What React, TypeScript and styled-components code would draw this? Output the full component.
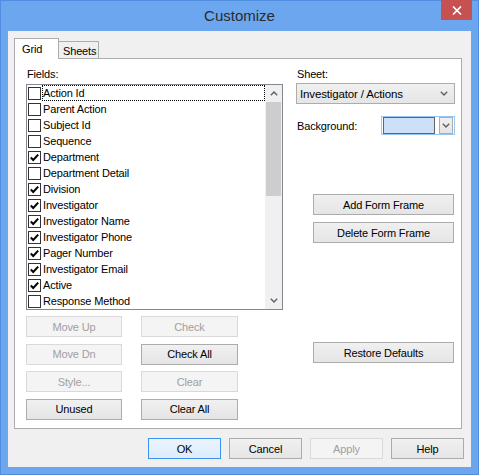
import { styled, createGlobalStyle } from "styled-components"

const GlobalStyle = createGlobalStyle`
    html, body {
        margin: 0;
        padding: 0;
        background: #6ba6ef;
    }
    body {
        font-family: "Liberation Sans", Arial, sans-serif;
        font-size: 11px;
        letter-spacing: -0.15px;
        color: #000;
    }
`

type field = {
    name: string
    checked: boolean
}

const fields: field[] = [
    { name: "Action Id", checked: false },
    { name: "Parent Action", checked: false },
    { name: "Subject Id", checked: false },
    { name: "Sequence", checked: false },
    { name: "Department", checked: true },
    { name: "Department Detail", checked: false },
    { name: "Division", checked: true },
    { name: "Investigator", checked: true },
    { name: "Investigator Name", checked: true },
    { name: "Investigator Phone", checked: true },
    { name: "Pager Number", checked: true },
    { name: "Investigator Email", checked: true },
    { name: "Active", checked: true },
    { name: "Response Method", checked: false },
]

const Chevron = ({ up }: { up?: boolean }) => (
    <svg width="8" height="5" viewBox="0 0 8 5">
        <polyline
            points={up ? "0.8,4.2 4,1 7.2,4.2" : "0.8,0.8 4,4 7.2,0.8"}
            fill="none"
            stroke="#606060"
            strokeWidth="1.4"
        />
    </svg>
)

const App = () => {
    return (
        <>
            <GlobalStyle />
            <Window>
                <TitleBar>
                    <span />
                    <Title>Customize</Title>
                    <CloseButton>
                        <svg width="10" height="9" viewBox="0 0 10 9">
                            <path d="M1 0.5 L9 8.5 M9 0.5 L1 8.5" stroke="#fff" strokeWidth="1.7" />
                        </svg>
                    </CloseButton>
                </TitleBar>
                <Client>
                    <TabStrip>
                        <Tab $active>Grid</Tab>
                        <Tab>Sheets</Tab>
                    </TabStrip>
                    <Panel>
                        <LeftColumn>
                            <Label>Fields:</Label>
                            <ListBox>
                                <Rows>
                                    {fields.map((f, i) => (
                                        <Row key={f.name}>
                                            <CheckBox>
                                                {f.checked && (
                                                    <svg width="11" height="11" viewBox="0 0 11 11">
                                                        <polyline
                                                            points="1.8,5.5 4.2,8 9.2,2.6"
                                                            fill="none"
                                                            stroke="#000"
                                                            strokeWidth="2"
                                                        />
                                                    </svg>
                                                )}
                                            </CheckBox>
                                            <RowText $focused={i === 0}>{f.name}</RowText>
                                        </Row>
                                    ))}
                                </Rows>
                                <ScrollBar>
                                    <ScrollArrow><Chevron up /></ScrollArrow>
                                    <Thumb />
                                    <Track />
                                    <ScrollArrow><Chevron /></ScrollArrow>
                                </ScrollBar>
                            </ListBox>
                            <ButtonGrid>
                                <Button disabled>Move Up</Button>
                                <Button disabled>Check</Button>
                                <Button disabled>Move Dn</Button>
                                <Button>Check All</Button>
                                <Button disabled>Style...</Button>
                                <Button disabled>Clear</Button>
                                <Button>Unused</Button>
                                <Button>Clear All</Button>
                            </ButtonGrid>
                        </LeftColumn>
                        <RightColumn>
                            <Label $gap={2}>Sheet:</Label>
                            <Select>
                                <span>Investigator / Actions</span>
                                <Chevron />
                            </Select>
                            <BackgroundRow>
                                <span>Background:</span>
                                <ColorCombo>
                                    <Swatch />
                                    <DropButton><Chevron /></DropButton>
                                </ColorCombo>
                            </BackgroundRow>
                            <SideButton $top={59}>Add Form Frame</SideButton>
                            <SideButton $top={7}>Delete Form Frame</SideButton>
                            <SideButton $top={99}>Restore Defaults</SideButton>
                        </RightColumn>
                    </Panel>
                    <DialogButtons>
                        <Button $default>OK</Button>
                        <Button>Cancel</Button>
                        <Button disabled>Apply</Button>
                        <Button>Help</Button>
                    </DialogButtons>
                </Client>
            </Window>
        </>
    )
}

const Window = styled.div`
    width: 479px;
    height: 475px;
    box-sizing: border-box;
    background: #6ba6ef;
    border: 1px solid #4f8ee0;
    display: flex;
    flex-direction: column;
`

const TitleBar = styled.div`
    height: 30px;
    display: grid;
    grid-template-columns: 1fr auto 1fr;
    align-items: start;
`

const Title = styled.div`
    font-size: 15px;
    letter-spacing: 0;
    line-height: 29px;
    color: #2b2b2b;
`

const CloseButton = styled.div`
    justify-self: end;
    width: 31px;
    height: 20px;
    margin-right: 6px;
    margin-top: -1px;
    background: #c75050;
    display: flex;
    align-items: center;
    justify-content: center;
`

const Client = styled.div`
    flex: 1;
    margin: 0 7px 7px 7px;
    background: #f0f0f0;
    display: flex;
    flex-direction: column;
    padding: 7px 9px 0 6px;
`

const TabStrip = styled.div`
    display: flex;
    align-items: flex-end;
    margin-bottom: -1px;
    position: relative;
    z-index: 1;
`

const Tab = styled.div<{ $active?: boolean }>`
    box-sizing: border-box;
    border: 1px solid #adadad;
    border-bottom: none;
    line-height: 13px;
    background: ${p => p.$active ? "#fff" : "#f0f0f0"};
    height: ${p => p.$active ? "21px" : "17px"};
    width: ${p => p.$active ? "45px" : "41px"};
    padding: ${p => p.$active ? "4px 0 0 7px" : "3px 0 0 4px"};
    margin-bottom: ${p => p.$active ? "0" : "1px"};
    margin-left: ${p => p.$active ? "0" : "-1px"};
`

const Panel = styled.div`
    height: 371px;
    box-sizing: border-box;
    background: #fff;
    border: 1px solid #adadad;
    padding: 9px 0 0 11px;
    display: grid;
    grid-template-columns: 257px 159px;
    column-gap: 13px;
    align-items: start;
`

const LeftColumn = styled.div`
    display: flex;
    flex-direction: column;
`

const RightColumn = styled.div`
    display: flex;
    flex-direction: column;
`

const Label = styled.div<{ $gap?: number }>`
    line-height: 13px;
    padding-left: 1px;
    margin-bottom: ${p => p.$gap ?? 3}px;
`

const ListBox = styled.div`
    height: 226px;
    box-sizing: border-box;
    border: 1px solid #828790;
    display: flex;
    overflow: hidden;
`

const Rows = styled.div`
    flex: 1;
    display: flex;
    flex-direction: column;
`

const Row = styled.div`
    height: 16px;
    flex-shrink: 0;
    display: flex;
    align-items: center;
    padding-left: 1px;
`

const CheckBox = styled.div`
    width: 13px;
    height: 13px;
    box-sizing: border-box;
    border: 1px solid #333;
    background: #fff;
    margin-right: 1px;
    display: flex;
    align-items: center;
    justify-content: center;
`

const RowText = styled.div<{ $focused?: boolean }>`
    flex: 1;
    height: 16px;
    box-sizing: border-box;
    line-height: 14px;
    border: 1px dotted ${p => p.$focused ? "#000" : "transparent"};
`

const ScrollBar = styled.div`
    width: 17px;
    background: #f0f0f0;
    display: flex;
    flex-direction: column;
`

const ScrollArrow = styled.div`
    height: 17px;
    display: flex;
    align-items: center;
    justify-content: center;
`

const Thumb = styled.div`
    height: 94px;
    margin: 0 1px;
    background: #cdcdcd;
`

const Track = styled.div`
    flex: 1;
`

const Button = styled.button<{ $default?: boolean }>`
    height: 21px;
    width: 100%;
    padding: 0;
    margin: 0;
    font-family: "Liberation Sans", Arial, sans-serif;
    font-size: 11px;
    letter-spacing: -0.15px;
    color: #000;
    border-radius: 0;
    border: 1px solid ${p => p.$default ? "#3c94f0" : "#acacac"};
    background: ${p => p.$default ? "linear-gradient(#ecf4fc, #dcecfc)" : "linear-gradient(#f0f0f0, #e5e5e5)"};

    &:disabled {
        background: #f4f4f4;
        border-color: #d9d9d9;
        color: #a0a0a0;
    }
`

const ButtonGrid = styled.div`
    margin-top: 6px;
    display: grid;
    grid-template-columns: 96px 97px;
    column-gap: 19px;
    row-gap: 6.5px;
`

const Select = styled.div`
    height: 21px;
    box-sizing: border-box;
    border: 1px solid #acacac;
    background: linear-gradient(#f0f0f0, #e5e5e5);
    display: flex;
    align-items: center;
    justify-content: space-between;
    padding: 0 6px 0 3px;
    font-size: 11.5px;
`

const BackgroundRow = styled.div`
    margin-top: 12px;
    display: flex;
    align-items: center;
    justify-content: space-between;
    padding-left: 1px;
`

const ColorCombo = styled.div`
    width: 74px;
    height: 19px;
    box-sizing: border-box;
    border: 1px solid #99c6f2;
    background: #fff;
    display: flex;
    align-items: stretch;
    gap: 4px;
    padding: 0 1px 0 1px;
`

const Swatch = styled.div`
    width: 52px;
    box-sizing: border-box;
    border: 1px solid #646464;
    background: #cce0f8;
`

const DropButton = styled.div`
    flex: 1;
    box-sizing: border-box;
    border: 1px solid #acacac;
    background: linear-gradient(#f0f0f0, #e5e5e5);
    display: flex;
    align-items: center;
    justify-content: center;
`

const SideButton = styled(Button)<{ $top: number }>`
    width: 141px;
    margin-left: 17px;
    margin-top: ${p => p.$top}px;
`

const DialogButtons = styled.div`
    margin-top: 9px;
    margin-right: -2px;
    display: flex;
    justify-content: flex-end;
    gap: 8px;

    button {
        width: 73px;
    }
`

export default App
